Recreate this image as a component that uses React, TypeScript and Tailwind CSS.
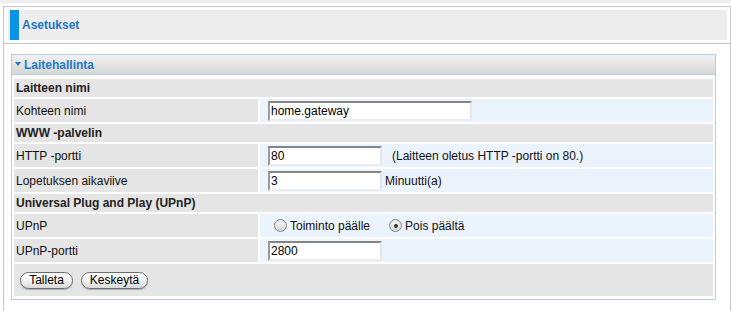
import React from "react";

function Input({ value, w }: { value: string; w: string }) {
  return (
    <div
      className={`${w} h-[20px] bg-white border-2 border-t-[#858585] border-l-[#9a9a9a] border-r-[#e6e6e6] border-b-[#ececec] flex items-center pl-[1px] text-[12px] text-black leading-none`}
    >
      {value}
    </div>
  );
}

function Radio({ checked }: { checked?: boolean }) {
  return (
    <span className="w-[13px] h-[13px] rounded-full border border-[#8a8a8a] bg-linear-to-b from-[#fdfdfd] to-[#d4d4d4] flex items-center justify-center shadow-[inset_0_1px_1px_rgba(0,0,0,0.15)]">
      {checked && <span className="w-[4px] h-[4px] rounded-full bg-[#333]" />}
    </span>
  );
}

function Section({ title }: { title: string }) {
  return (
    <div className="h-[18px] bg-[#e5e5e5] flex items-center pl-[2px] font-bold text-[#222]">
      {title}
    </div>
  );
}

function Row({ label, children, h = "h-[23px]" }: { label: string; children?: React.ReactNode; h?: string }) {
  return (
    <div className={`${h} flex gap-[2px]`}>
      <div className="w-[244px] bg-[#e5e5e5] flex items-center pl-[2px] text-[#111]">{label}</div>
      <div className="flex-1 bg-[#ebf3fd] flex items-center pl-[8px]">{children}</div>
    </div>
  );
}

function Button({ children, w }: { children: React.ReactNode; w: string }) {
  return (
    <div
      className={`${w} h-[17px] rounded-full border border-[#6e6e6e] bg-linear-to-b from-[#ffffff] via-[#f3f3f3] to-[#d9d9d9] flex items-center justify-center text-[12px] text-black shadow-[0_1px_1px_rgba(0,0,0,0.25)]`}
    >
      {children}
    </div>
  );
}

export default function App() {
  return (
    <div className="w-[731px] h-[311px] overflow-hidden bg-white text-[12px] text-[#111] font-['Liberation_Sans',Arial,sans-serif]">
      <div className="h-[3px] bg-[#eeeeee]" />
      <div className="mt-[3px] ml-[3px] w-[728px] h-[320px] border-x border-t border-[#c6c6c6]">
        <div className="pt-[3px] pl-[4px] pb-[3px] border-b border-[#c6c6c6]">
          <div className="w-[719px] h-[30px] bg-[#ededed] flex items-center">
            <div className="ml-[2px] w-[9px] h-full bg-[#0a93e2]" />
            <div className="ml-[3px] font-bold text-[#1c77c3]">Asetukset</div>
          </div>
        </div>
        <div className="pt-[10px] pl-[7px]">
          <div className="w-[705px] border border-[#b6cde6]">
            <div className="h-[20px] border-b border-[#b6cde6] bg-linear-to-b from-[#f2f2f2] to-[#d7d7d7] flex items-center pl-[3px]">
              <svg width="6" height="4" viewBox="0 0 6 4" className="mt-[-2px]">
                <polygon points="0,0 6,0 3,4" fill="#1f7ac6" />
              </svg>
              <span className="ml-[3px] font-bold text-[#1f7ac6]">Laitehallinta</span>
            </div>
            <div className="pt-[4px] px-[2px] pb-[3px] flex flex-col gap-[2px]">
              <Section title="Laitteen nimi" />
              <Row label="Kohteen nimi">
                <Input value="home.gateway" w="w-[204px]" />
              </Row>
              <Section title="WWW -palvelin" />
              <Row label="HTTP -portti">
                <Input value="80" w="w-[114px]" />
                <span className="ml-[10px]">(Laitteen oletus HTTP -portti on 80.)</span>
              </Row>
              <Row label="Lopetuksen aikaviive">
                <Input value="3" w="w-[114px]" />
                <span className="ml-[3px]">Minuutti(a)</span>
              </Row>
              <Section title="Universal Plug and Play (UPnP)" />
              <Row label="UPnP">
                <div className="ml-[6px] flex items-center">
                  <Radio />
                  <span className="ml-[3px]">Toiminto päälle</span>
                  <span className="ml-[19px]">
                    <Radio checked />
                  </span>
                  <span className="ml-[3px]">Pois päältä</span>
                </div>
              </Row>
              <Row label="UPnP-portti">
                <Input value="2800" w="w-[114px]" />
              </Row>
              <div className="h-[32px] bg-[#e5e5e5] flex items-center pl-[6px] gap-[8px]">
                <Button w="w-[53px]">Talleta</Button>
                <Button w="w-[67px]">Keskeytä</Button>
              </div>
            </div>
          </div>
        </div>
      </div>
    </div>
  );
}
